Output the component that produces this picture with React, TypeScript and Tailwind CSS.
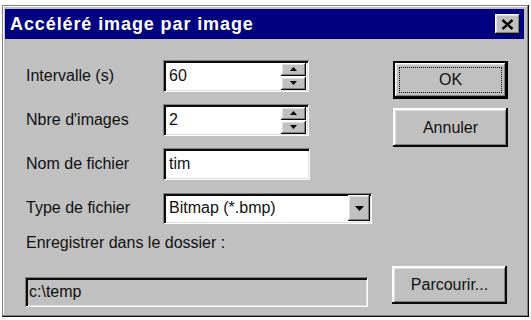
import React from "react";

const raised =
  "shadow-[inset_-2px_-2px_#0a0a0a,inset_2px_2px_#ffffff,inset_-3px_-3px_#808080,inset_3px_3px_#dfdfdf]";
const raisedSmall =
  "shadow-[inset_-1px_-1px_#0a0a0a,inset_1px_1px_#ffffff,inset_-2px_-2px_#808080,inset_2px_2px_#dfdfdf]";
const sunken =
  "shadow-[inset_1px_1px_#808080,inset_-1px_-1px_#ffffff,inset_3px_3px_#0a0a0a,inset_-2px_-2px_#dfdfdf]";

function UpArrow() {
  return (
    <svg width="7" height="4" viewBox="0 0 7 4">
      <polygon points="3.5,0 7,4 0,4" fill="#000" />
    </svg>
  );
}
function DownArrow({ w = 7, h = 4 }: { w?: number; h?: number }) {
  return (
    <svg width={w} height={h} viewBox={`0 0 ${w} ${h}`}>
      <polygon points={`0,0 ${w},0 ${w / 2},${h}`} fill="#000" />
    </svg>
  );
}

function Spinner({ value }: { value: string }) {
  return (
    <div className={`flex h-[32px] w-[146px] items-center bg-white pl-[6px] pr-[3px] ${sunken}`}>
      <span className="flex-1 leading-none">{value}</span>
      <div className="flex flex-col gap-[1px]">
        <div className={`flex h-[13px] w-[25px] items-center justify-center bg-[#c0c0c0] ${raisedSmall}`}>
          <UpArrow />
        </div>
        <div className={`flex h-[13px] w-[25px] items-center justify-center bg-[#c0c0c0] ${raisedSmall}`}>
          <DownArrow />
        </div>
      </div>
    </div>
  );
}

function Row({ label, children }: { label: string; children: React.ReactNode }) {
  return (
    <div className="flex h-[32px] items-center">
      <span className="ml-[1px] w-[137px]">{label}</span>
      {children}
    </div>
  );
}

export default function App() {
  return (
    <div
      className="h-[320px] w-[531px] bg-white pl-[2px] pt-[5px] text-[16px] text-[#111]"
      style={{ fontFamily: '"Liberation Sans", Arial, sans-serif' }}
    >
      <div
        className={`flex h-[312px] w-[527px] flex-col bg-[#c0c0c0] pl-[3px] pr-[5px] pt-[4px] shadow-[inset_-1px_-1px_#0a0a0a,inset_1px_1px_#808080,inset_-2px_-2px_#808080,inset_2px_2px_#ffffff]`}
      >
        {/* Title bar */}
        <div className="flex h-[30px] items-center justify-between bg-[#000080] pl-[5px] pr-[4px]">
          <span className="text-[18px] font-bold tracking-[0.9px] text-white">Accéléré image par image</span>
          <div className={`flex h-[20px] w-[25px] items-center justify-center bg-[#c0c0c0] ${raisedSmall}`}>
            <svg width="13" height="11" viewBox="0 0 13 11">
              <path d="M1.5 1 L11.5 10 M11.5 1 L1.5 10" stroke="#000" strokeWidth="2.4" />
            </svg>
          </div>
        </div>

        {/* Body */}
        <div className="flex flex-col pl-[20px] pt-[21px]">
          <div className="flex">
            <div className="flex w-[347px] flex-col gap-[12px]">
              <Row label="Intervalle (s)">
                <Spinner value="60" />
              </Row>
              <Row label="Nbre d'images">
                <Spinner value="2" />
              </Row>
              <Row label="Nom de fichier">
                <div className={`flex h-[32px] w-[147px] items-center bg-white pl-[6px] ${sunken}`}>
                  <span className="leading-none">tim</span>
                </div>
              </Row>
              <Row label="Type de fichier">
                <div className={`flex h-[31px] w-[209px] items-center bg-white pl-[6px] pr-[2px] ${sunken}`}>
                  <span className="flex-1 leading-none">Bitmap (*.bmp)</span>
                  <div className={`flex h-[26px] w-[22px] items-center justify-center bg-[#c0c0c0] ${raisedSmall}`}>
                    <DownArrow w={9} h={5} />
                  </div>
                </div>
              </Row>
            </div>
            <div className="ml-[21px] flex flex-col">
              <div className="mt-[1px] h-[38px] w-[115px] border-2 border-black">
                <div className={`flex h-full w-full items-center justify-center bg-[#c0c0c0] p-[4px] ${raisedSmall}`}>
                  <div className="flex h-full w-full items-center justify-center border border-dotted border-black">
                    OK
                  </div>
                </div>
              </div>
              <div className={`mt-[9px] flex h-[39px] w-[115px] items-center justify-center bg-[#c0c0c0] ${raised}`}>
                Annuler
              </div>
            </div>
          </div>

          <div className="ml-[1px] mt-[10px] h-[18px] leading-[18px]">Enregistrer dans le dossier :</div>

          <div className="mt-[14px] flex">
            <div className={`mt-[11px] flex h-[30px] w-[343px] items-center bg-[#c0c0c0] pl-[4px] ${sunken}`}>
              <span className="leading-none">c:\temp</span>
            </div>
            <div className={`ml-[24px] flex h-[38px] w-[115px] items-center justify-center bg-[#c0c0c0] ${raised}`}>
              Parcourir...
            </div>
          </div>
        </div>
      </div>
    </div>
  );
}
